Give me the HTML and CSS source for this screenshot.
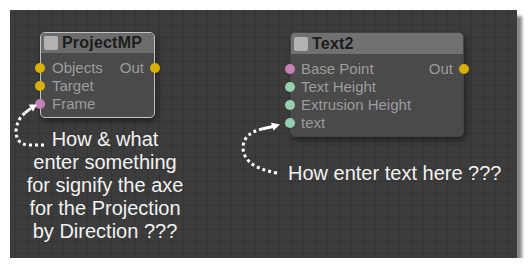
FILE: index.html
```html
<!DOCTYPE html>
<html lang="en">
	<head>
		<title>Node editor</title>
		<meta http-equiv="Content-Type" content="text/html; charset=utf-8">
		<link rel="stylesheet" href="styles.css">
	</head>
	<body>
		<div class="canvas">
			<div class="node node-project selected">
				<div class="head">
					<span class="check"></span>
					<span class="title">ProjectMP</span>
				</div>
				<div class="body">
					<div class="row"><span class="dot yellow"></span><span>Objects</span><span class="out">Out<span class="dot yellow"></span></span></div>
					<div class="row"><span class="dot yellow"></span><span>Target</span></div>
					<div class="row"><span class="dot pink"></span><span>Frame</span></div>
				</div>
			</div>

			<div class="node node-text">
				<div class="head">
					<span class="check"></span>
					<span class="title">Text2</span>
				</div>
				<div class="body">
					<div class="row"><span class="dot pink"></span><span>Base Point</span><span class="out">Out<span class="dot yellow"></span></span></div>
					<div class="row"><span class="dot mint"></span><span>Text Height</span></div>
					<div class="row"><span class="dot mint"></span><span>Extrusion Height</span></div>
					<div class="row"><span class="dot mint"></span><span>text</span></div>
				</div>
			</div>

			<svg class="arrows" width="507" height="248" viewBox="10 10 507 248">
				<path class="dots" d="M44 145 H30 Q16 145 16 131 Q17 119 25 113"/>
				<path class="shaft" d="M25 113 Q28 110 31 108.5"/>
				<polygon points="37,104.5 33,111.5 28.7,104.5"/>
				<path class="dots" d="M277 173 Q243 167 243 147 Q244 133 262 129"/>
				<path class="shaft" d="M262 129 L273 126.5"/>
				<polygon points="280,124.5 273.5,130.6 271,122.8"/>
			</svg>

			<p class="note note-project">How &amp; what<br>enter something<br>for signify the axe<br>for the Projection<br>by Direction ???</p>
			<p class="note note-text">How enter text here ???</p>
		</div>
	</body>
</html>
```

FILE: styles.css
```css
body {
	margin: 0;
	background-color: #fff;
	font-family: 'Liberation Sans', Arial, sans-serif;
}
.canvas {
	position: relative;
	margin: 10px 0 0 10px;
	width: 507px;
	height: 248px;
	background-color: #3c3c3c;
	background-image:
		linear-gradient(to right, #353535 1px, transparent 1px),
		linear-gradient(to bottom, #353535 1px, transparent 1px);
	background-size: 12px 12px;
	background-position: 5px 3px;
	box-shadow: 5px 6px 3px #868686;
}
.node {
	position: absolute;
	display: flex;
	flex-direction: column;
	box-sizing: border-box;
	background-color: #4a4a4a;
	border: 1px solid #444;
	border-radius: 5px;
	box-shadow: 2px 3px 6px rgba(0, 0, 0, .45);
}
.node.selected {
	border-color: #c4c4c4;
}
.node-project {
	left: 30px;
	top: 22px;
	width: 115px;
	height: 86px;
}
.node-text {
	left: 280px;
	top: 22px;
	width: 174px;
	height: 105px;
}
.head {
	display: flex;
	align-items: center;
	gap: 4px;
	height: 20px;
	padding-left: 3px;
	background-color: #6c6c6c;
	border-radius: 4px 4px 0 0;
}
.node-text .head {
	height: 21px;
	background-color: #717171;
}
.check {
	width: 14px;
	height: 14px;
	background-color: #b2b2b2;
	border-radius: 2px;
}
.title {
	font-size: 16px;
	font-weight: bold;
	color: #1c1c1c;
	letter-spacing: .2px;
}
.body {
	padding: 6px 10px 0 11px;
}
.node-text .body {
	padding-left: 10px;
}
.row {
	position: relative;
	display: flex;
	justify-content: space-between;
	height: 18px;
	line-height: 18px;
	font-size: 15px;
	color: #9c9c9c;
	white-space: nowrap;
}
.out {
	position: relative;
}
.dot {
	position: absolute;
	top: 4px;
	left: -17px;
	width: 10px;
	height: 10px;
	border-radius: 50%;
}
.node-text .dot {
	left: -16px;
}
.out .dot,
.node-text .out .dot {
	left: auto;
	right: -16px;
}
.yellow {
	background-color: #d8b000;
}
.pink {
	background-color: #c680b6;
}
.mint {
	background-color: #96cfae;
}
.arrows {
	position: absolute;
	left: 0;
	top: 0;
}
.arrows .dots {
	fill: none;
	stroke: #fff;
	stroke-width: 3;
	stroke-dasharray: 3 3;
}
.arrows .shaft {
	fill: none;
	stroke: #fff;
	stroke-width: 3;
}
.arrows polygon {
	fill: #fff;
}
.note {
	position: absolute;
	margin: 0;
	color: #f2f2f2;
	white-space: nowrap;
}
.note-project {
	left: 10px;
	top: 118px;
	width: 170px;
	text-align: center;
	font-size: 20px;
	line-height: 23px;
}
.note-text {
	left: 278px;
	top: 152px;
	font-size: 20px;
	line-height: 23px;
}
```
